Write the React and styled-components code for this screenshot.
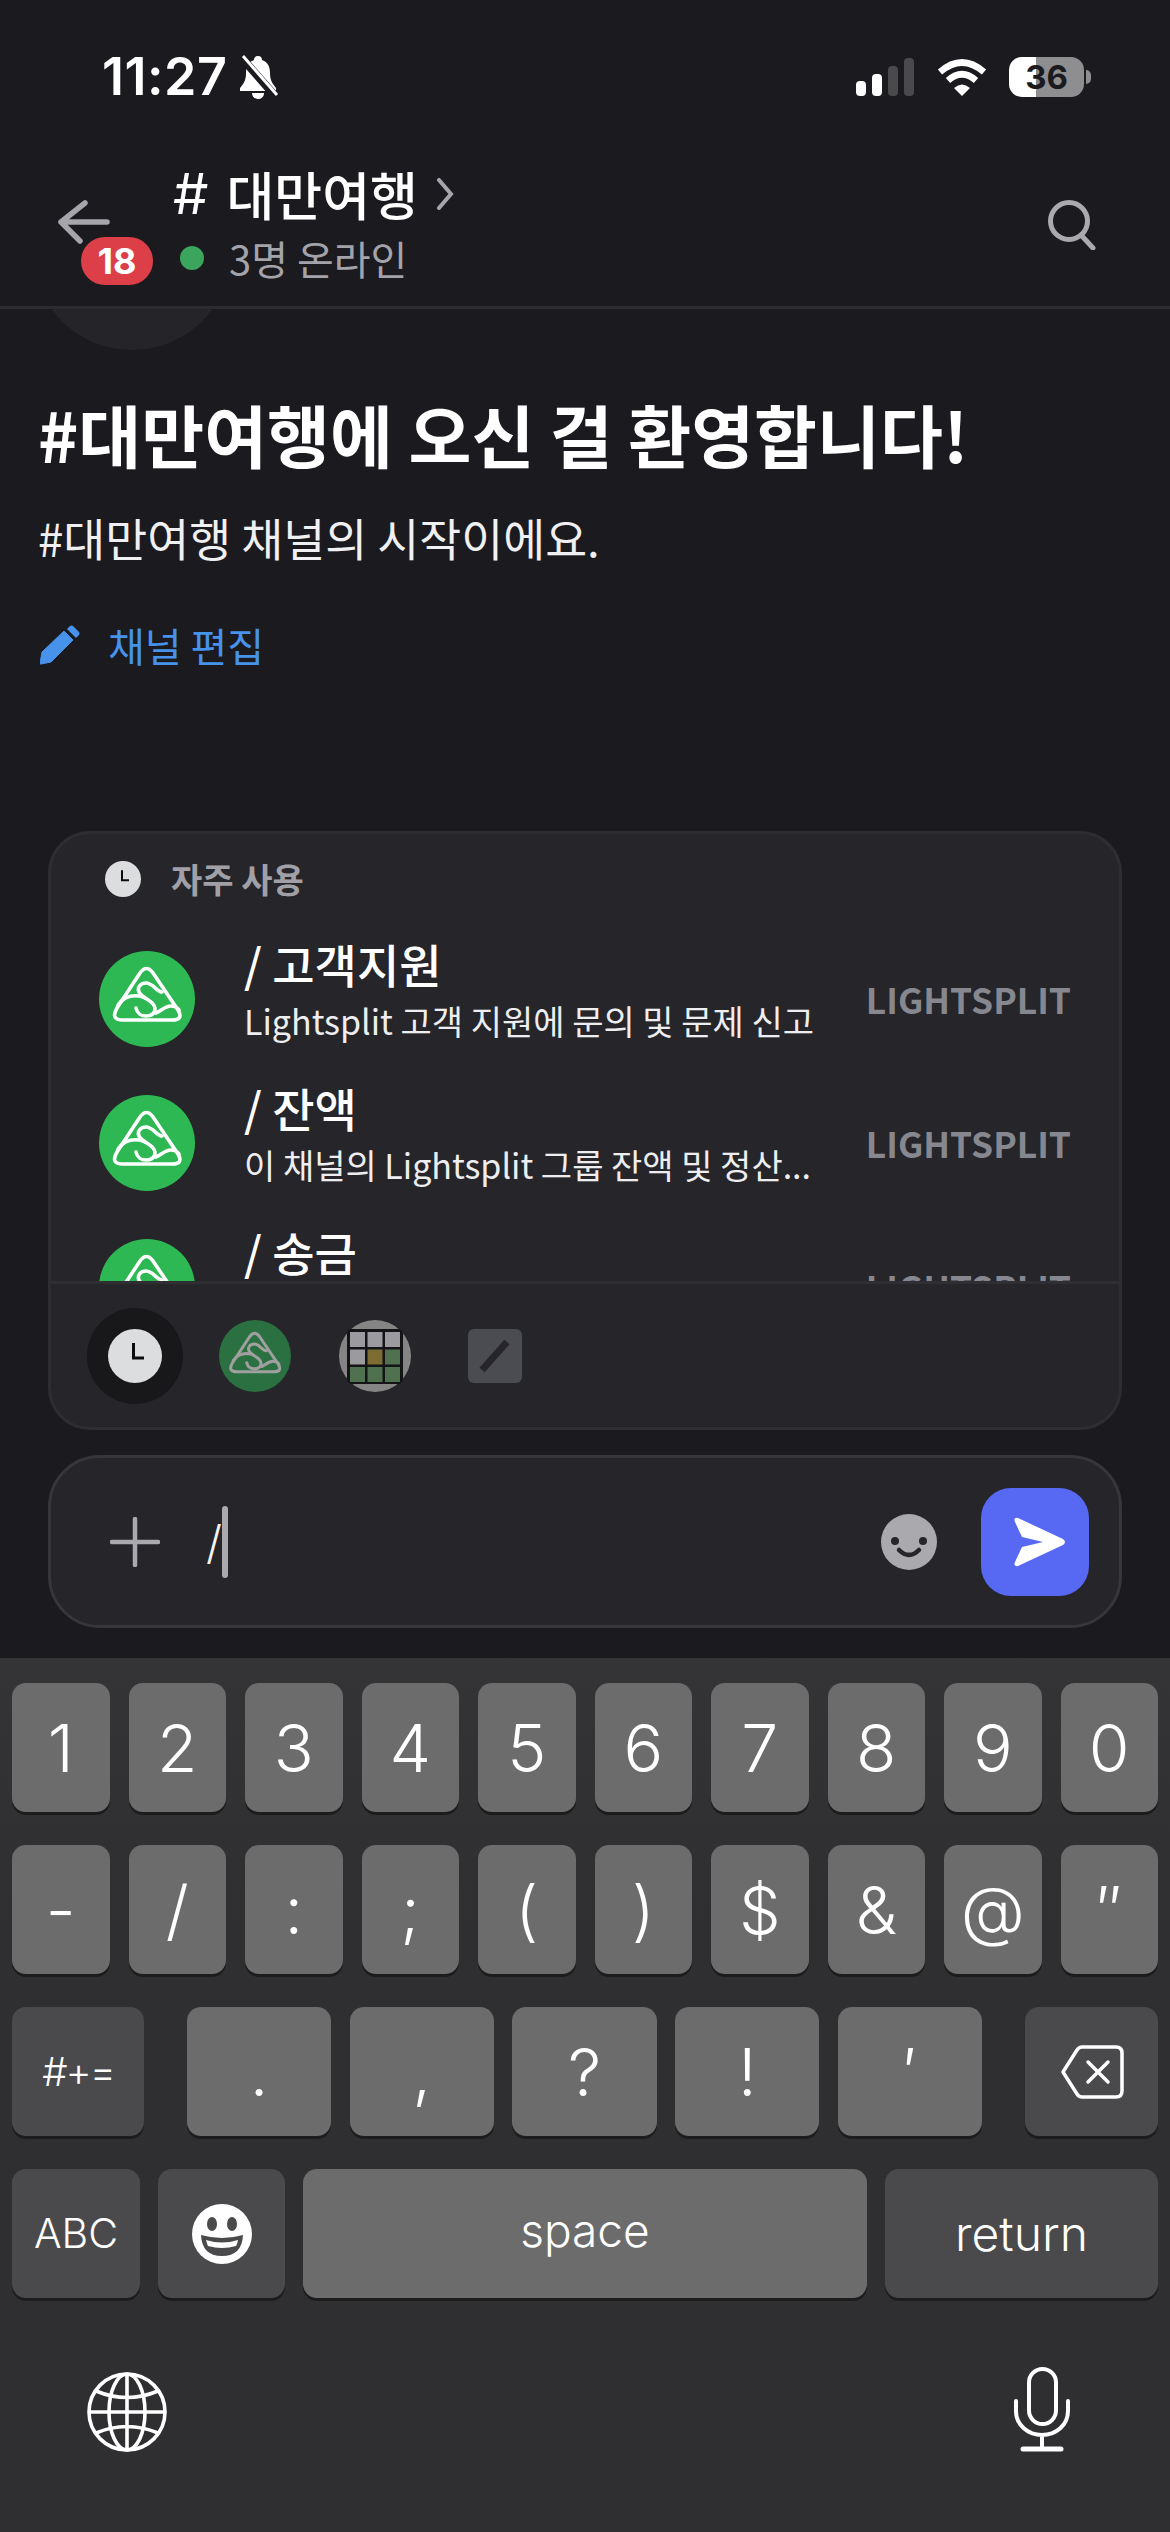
import React from "react";
import styled, { createGlobalStyle } from "styled-components";

const KR = `"Noto Sans CJK KR", "Noto Sans", sans-serif`;
const UI = `Inter, "Liberation Sans", sans-serif`;

const GlobalStyle = createGlobalStyle`
  html, body { margin: 0; padding: 0; background: #1a1a1f; }
  * { box-sizing: border-box; }
`;

const Screen = styled.div`
  width: 1170px;
  height: 2532px;
  display: flex;
  flex-direction: column;
  overflow: hidden;
  background: #1a1a1f;
  color: #fff;
  font-family: ${KR};
`;

/* status bar */
const StatusBar = styled.div`
  height: 150px;
  padding: 47px 79px 0 102px;
  display: flex;
  justify-content: space-between;
  align-items: flex-start;
`;
const StatusLeft = styled.div`
  display: flex;
  align-items: center;
  height: 60px;
  gap: 10px;
`;
const Time = styled.span`
  font-family: ${UI};
  font-size: 52px;
  font-weight: 600;
  line-height: 60px;
  letter-spacing: 0.5px;
`;
const StatusRight = styled.div`
  display: flex;
  align-items: center;
  height: 60px;
`;
const Battery = styled.div`
  width: 75px;
  height: 40px;
  margin-left: 22px;
  border-radius: 13px;
  background: linear-gradient(90deg, #fff 36%, #8e8e90 36%);
  color: #1a1a1f;
  font-family: ${UI};
  font-size: 33px;
  font-weight: 700;
  line-height: 40px;
  text-align: center;
`;
const BatteryNub = styled.div`
  width: 5px;
  height: 14px;
  margin-left: 2px;
  border-radius: 0 7px 7px 0;
  background: #8e8e90;
`;

/* channel header */
const Header = styled.header`
  height: 159px;
  padding: 12px 74px 0 58px;
  display: flex;
  align-items: flex-start;
  border-bottom: 3px solid #2b2c30;
`;
const BackButton = styled.div`
  position: relative;
  width: 52px;
  height: 44px;
  margin-top: 38px;
`;
const Badge = styled.span`
  position: absolute;
  left: 23px;
  top: 37px;
  width: 72px;
  height: 48px;
  border-radius: 24px;
  background: #dd3f48;
  box-shadow: 0 0 0 5px #1a1a1f;
  font-family: ${UI};
  font-size: 36px;
  font-weight: 700;
  line-height: 48px;
  text-align: center;
`;
const HeaderText = styled.div`
  margin-left: 63px;
  flex: 1;
`;
const ChannelName = styled.div`
  display: flex;
  align-items: center;
  height: 60px;
  margin-top: 2px;
  font-size: 52px;
  font-weight: 500;
  line-height: 60px;
  white-space: nowrap;
`;
const Hash = styled.span`
  font-family: ${UI};
  font-size: 56px;
  font-weight: 400;
  margin-right: 18px;
`;
const Presence = styled.div`
  display: flex;
  align-items: center;
  height: 52px;
  margin-top: 8px;
  color: #a3a3a9;
  font-size: 40px;
  line-height: 52px;
`;
const Dot = styled.span`
  width: 24px;
  height: 24px;
  margin: 0 25px 0 7px;
  border-radius: 50%;
  background: #3ba55d;
`;

/* channel welcome */
const AvatarStub = styled.div`
  height: 42px;
  padding-left: 32px;
  overflow: hidden;
`;
const AvatarCircle = styled.div`
  width: 200px;
  height: 200px;
  margin-top: -159px;
  border-radius: 50%;
  background: #252529;
`;
const Welcome = styled.section`
  padding: 0 38px;
`;
const WelcomeTitle = styled.h1`
  margin: 35px 0 0;
  font-size: 68.4px;
  font-weight: 700;
  line-height: 96px;
  white-space: nowrap;
`;
const WelcomeSub = styled.p`
  margin: 25px 0 0;
  color: #f0f0f2;
  font-size: 45.6px;
  line-height: 60px;
`;
const EditLink = styled.div`
  display: flex;
  align-items: center;
  gap: 28px;
  margin: 50px 0 0 2px;
  color: #4792ea;
  font-size: 40px;
  line-height: 56px;
`;

/* lower panel */
const Lower = styled.div`
  margin-top: auto;
  padding: 0 48px 30px;
  display: flex;
  flex-direction: column;
  gap: 25px;
`;
const Suggest = styled.div`
  height: 599px;
  display: flex;
  flex-direction: column;
  border: 3px solid #2d2d32;
  border-radius: 42px;
  background: #25252a;
`;
const SuggestHead = styled.div`
  height: 93px;
  padding: 27px 0 0 54px;
  display: flex;
  align-items: flex-start;
  gap: 30px;
  color: #a0a0a6;
  font-size: 34px;
  font-weight: 700;
  line-height: 36px;
`;
const CommandList = styled.div`
  height: 354px;
  overflow: hidden;
  flex: none;
`;
const CommandRow = styled.div`
  height: 144px;
  padding: 0 48px 0 48px;
  display: flex;
  align-items: center;
`;
const CommandText = styled.div`
  flex: 1;
  min-width: 0;
  height: 128px;
  margin-left: 49px;
`;
const CommandName = styled.div`
  font-size: 46px;
  font-weight: 500;
  line-height: 56px;
`;
const CommandDesc = styled.div`
  margin-top: 7px;
  color: #eeeef0;
  font-size: 34px;
  line-height: 46px;
  white-space: nowrap;
`;
const CommandSource = styled.div`
  color: #87888f;
  font-size: 35.4px;
  font-weight: 700;
  line-height: 44px;
`;
const Tabs = styled.div`
  flex: 1;
  padding-left: 36px;
  display: flex;
  align-items: center;
  gap: 24px;
  border-top: 3px solid #2e2e33;
`;
const Tab = styled.div`
  width: 96px;
  height: 96px;
  display: flex;
  align-items: center;
  justify-content: center;
  border-radius: 50%;
  background: ${(p) => (p.$active ? "#18181b" : "transparent")};
`;
const SlashTile = styled.div`
  width: 54px;
  height: 54px;
  border-radius: 6px;
  background: #4b4c52;
`;

/* composer */
const Composer = styled.div`
  height: 173px;
  padding: 0 30px 0 59px;
  display: flex;
  align-items: center;
  border: 3px solid #36363b;
  border-radius: 52px;
  background: #25252a;
`;
const Draft = styled.div`
  flex: 1;
  display: flex;
  align-items: center;
  margin-left: 46px;
  color: #f4f4f5;
  font-family: ${UI};
  font-size: 46px;
  font-weight: 300;
  line-height: 72px;
`;
const Caret = styled.span`
  width: 6px;
  height: 72px;
  border-radius: 3px;
  background: #a9a9ae;
`;
const SendButton = styled.div`
  width: 108px;
  height: 108px;
  margin-left: 44px;
  border-radius: 30px;
  background: #5768f3;
`;

/* keyboard */
const Keyboard = styled.div`
  height: 874px;
  flex: none;
  padding: 25px 12px 0;
  display: flex;
  flex-direction: column;
  gap: 33px;
  background: linear-gradient(#343436, #2f2f31 30%);
`;
const KeyRow = styled.div`
  display: flex;
  justify-content: space-between;
  gap: ${(p) => p.$gap || 19}px;
`;
const KeyGroup = styled.div`
  width: 795px;
  display: flex;
  gap: 18.5px;
`;
const Key = styled.div`
  flex: ${(p) => (p.$w ? `none` : 1)};
  width: ${(p) => (p.$w ? `${p.$w}px` : "auto")};
  height: 129px;
  display: flex;
  align-items: center;
  justify-content: center;
  border-radius: 14px;
  background: ${(p) => (p.$dark ? "#4a4a4c" : "#6c6c6d")};
  box-shadow: 0 3px 0 #1c1c1d;
  font-family: ${UI};
  font-size: ${(p) => p.$size || 66}px;
  font-weight: 300;
  line-height: 1;
  letter-spacing: ${(p) => p.$track || 0}px;
  padding-bottom: ${(p) => p.$lift || 0}px;
`;
const KeyboardFoot = styled.div`
  margin-top: 36px;
  padding: 0 88px 0 75px;
  display: flex;
  justify-content: space-between;
  align-items: flex-end;
`;

const Logo = ({ size, bg, stroke, sw = 3.6 }) => (
  <svg width={size} height={size} viewBox="0 0 96 96" style={{ flex: "none" }}>
    <circle cx="48" cy="48" r="48" fill={bg} />
    <g fill="none" stroke={stroke} strokeWidth={sw} strokeLinecap="round" strokeLinejoin="round">
      <path d="M41 22 Q47.5 13 54 22 L79 59 Q85 69 73 69 L24 69 Q11 69 18 57 Z" />
      <path d="M63 41 C58 41 54 32 47 32 C41 32 38 37 40 41 C42 46 50 48 54 53 C58 58 56 65 47 65 C42 65 38 62 37 57" />
      <path d="M19 54 C24 47 32 44 40 45 C42 45 44 46 46 47" />
      <path d="M57 62 C62 60 66 55 72 55 C75 55 78 56 80 59" />
    </g>
  </svg>
);

const ClockIcon = ({ size }) => (
  <svg width={size} height={size} viewBox="0 0 54 54">
    <circle cx="27" cy="27" r="27" fill="#dcddde" />
    <path d="M25.5 14 V29 H36" fill="none" stroke="#0c0c0e" strokeWidth="3" />
  </svg>
);

const WORDLE = ["#9a9a9f", "#9a9a9f", "#9a9a9f", "#9a9a9f", "#7d6d33", "#4f7150", "#4f7150", "#4f7150", "#4f7150"];

const GridIcon = () => (
  <svg width="72" height="72" viewBox="0 0 72 72">
    <circle cx="36" cy="36" r="36" fill="#858585" />
    <rect x="8" y="9" width="56" height="55" rx="5" fill="#141416" />
    {WORDLE.map((c, i) => (
      <rect key={i} x={11 + (i % 3) * 17.5} y={12 + Math.floor(i / 3) * 17.5} width="15" height="15" fill={c} />
    ))}
  </svg>
);

const commands = [
  { name: "/ 고객지원", desc: "Lightsplit 고객 지원에 문의 및 문제 신고" },
  { name: "/ 잔액", desc: "이 채널의 Lightsplit 그룹 잔액 및 정산..." },
  { name: "/ 송금", desc: "" },
];

const row1 = ["1", "2", "3", "4", "5", "6", "7", "8", "9", "0"];
const row2 = ["-", "/", ":", ";", "(", ")", "$", "&", "@", "″"];
const row3 = [".", ",", "?", "!", "′"];

const App = () => {
  return (
    <Screen>
      <GlobalStyle />
      <StatusBar>
        <StatusLeft>
          <Time>11:27</Time>
          <svg width="42" height="44" viewBox="0 0 42 44">
            <path d="M21 1 C24 1 25 3 25 5 C31 7 33 12 33 18 C33 25 35 28 39 33 L39 36 L3 36 L3 33 C7 28 9 25 9 18 C9 12 11 7 17 5 C17 3 18 1 21 1 Z M15 38 H27 C27 42 24 44 21 44 C18 44 15 42 15 38 Z" fill="#fff" />
            <path d="M4 2 L39 42" stroke="#1a1a1f" strokeWidth="8" />
            <path d="M6 1 L40 40" stroke="#fff" strokeWidth="3" />
          </svg>
        </StatusLeft>
        <StatusRight>
          <svg width="58" height="38" viewBox="0 0 58 38">
            <rect x="0" y="23" width="10" height="15" rx="4" fill="#fff" />
            <rect x="16" y="16" width="10" height="22" rx="4" fill="#fff" />
            <rect x="32" y="8" width="10" height="30" rx="4" fill="#4a4a4c" />
            <rect x="48" y="0" width="10" height="38" rx="4" fill="#4a4a4c" />
          </svg>
          <svg width="50" height="38" viewBox="0 0 50 38" style={{ marginLeft: 23 }}>
            <path d="M3 14 Q25 -5 47 14" fill="none" stroke="#fff" strokeWidth="6.5" />
            <path d="M11 22.5 Q25 10 39 22.5" fill="none" stroke="#fff" strokeWidth="6.5" />
            <path d="M17 30 Q25 23 33 30 L25 38 Z" fill="#fff" />
          </svg>
          <Battery>36</Battery>
          <BatteryNub />
        </StatusRight>
      </StatusBar>

      <Header>
        <BackButton>
          <svg width="52" height="44" viewBox="0 0 52 44">
            <path d="M27 3 L3 22 L22 41 M3 22 H49" fill="none" stroke="#a5a5ab" strokeWidth="5.5" strokeLinecap="round" strokeLinejoin="round" />
          </svg>
          <Badge>18</Badge>
        </BackButton>
        <HeaderText>
          <ChannelName>
            <Hash>#</Hash>대만여행
            <svg width="18" height="32" viewBox="0 0 18 32" style={{ marginLeft: 18 }}>
              <path d="M3 2 L15 16 L3 30" fill="none" stroke="#a5a5ab" strokeWidth="4" strokeLinecap="round" />
            </svg>
          </ChannelName>
          <Presence>
            <Dot />
            3명 온라인
          </Presence>
        </HeaderText>
        <svg width="48" height="50" viewBox="0 0 48 50" style={{ marginTop: 38 }}>
          <circle cx="21" cy="21" r="18.5" fill="none" stroke="#a9a9ae" strokeWidth="5" />
          <path d="M33 35 L45 48" stroke="#a9a9ae" strokeWidth="5" strokeLinecap="round" />
        </svg>
      </Header>

      <AvatarStub>
        <AvatarCircle />
      </AvatarStub>
      <Welcome>
        <WelcomeTitle>#대만여행에 오신 걸 환영합니다!</WelcomeTitle>
        <WelcomeSub>#대만여행 채널의 시작이에요.</WelcomeSub>
        <EditLink>
          <svg width="40" height="40" viewBox="0 0 40 40">
            <path d="M1 39 Q0 39.5 0 38 L2 27 L24 6 L33 15 L11 37 Z" fill="currentColor" stroke="currentColor" strokeWidth="1" strokeLinejoin="round" />
            <path d="M27 4 L30 1 Q31 0 33 1 L39 7 Q40 9 39 10 L36 13 Z" fill="currentColor" />
          </svg>
          채널 편집
        </EditLink>
      </Welcome>

      <Lower>
        <Suggest>
          <SuggestHead>
            <ClockIcon size={36} />
            자주 사용
          </SuggestHead>
          <CommandList>
            {commands.map((c) => (
              <CommandRow key={c.name}>
                <Logo size={96} bg="#2db854" stroke="#fff" />
                <CommandText>
                  <CommandName>{c.name}</CommandName>
                  <CommandDesc>{c.desc}</CommandDesc>
                </CommandText>
                <CommandSource>LIGHTSPLIT</CommandSource>
              </CommandRow>
            ))}
          </CommandList>
          <Tabs>
            <Tab $active>
              <ClockIcon size={54} />
            </Tab>
            <Tab>
              <Logo size={72} bg="#2a7041" stroke="#a0a0a0" sw={4} />
            </Tab>
            <Tab>
              <GridIcon />
            </Tab>
            <Tab>
              <SlashTile>
                <svg width="54" height="54" viewBox="0 0 54 54">
                  <path d="M14 41 L39 13" stroke="#26262a" strokeWidth="7" />
                </svg>
              </SlashTile>
            </Tab>
          </Tabs>
        </Suggest>

        <Composer>
          <svg width="50" height="50" viewBox="0 0 50 50">
            <path d="M25 2 V48 M2 25 H48" stroke="#a9a9ae" strokeWidth="4.5" strokeLinecap="round" />
          </svg>
          <Draft>
            /<Caret />
          </Draft>
          <svg width="56" height="56" viewBox="0 0 56 56">
            <circle cx="28" cy="28" r="28" fill="#a9a9ae" />
            <circle cx="14" cy="27" r="4" fill="#25252a" />
            <circle cx="42" cy="27" r="4" fill="#25252a" />
            <path d="M18 36 Q28 46 38 36" fill="none" stroke="#25252a" strokeWidth="4.5" strokeLinecap="round" />
          </svg>
          <SendButton>
            <svg width="108" height="108" viewBox="0 0 108 108">
              <path d="M37 30 L82 51 Q86 54 82 57 L37 78 Q32 79 34 74 L41 59 L62 54 L41 49 L34 34 Q32 29 37 30 Z" fill="#fff" />
            </svg>
          </SendButton>
        </Composer>
      </Lower>

      <Keyboard>
        <KeyRow>
          {row1.map((k) => (
            <Key key={k}>{k}</Key>
          ))}
        </KeyRow>
        <KeyRow>
          {row2.map((k) => (
            <Key key={k}>{k}</Key>
          ))}
        </KeyRow>
        <KeyRow>
          <Key $dark $w={132} $size={40} $track={-2}>
            #+=
          </Key>
          <KeyGroup>
            {row3.map((k) => (
              <Key key={k}>{k}</Key>
            ))}
          </KeyGroup>
          <Key $dark $w={133}>
            <svg width="64" height="54" viewBox="0 0 64 54">
              <path d="M22 2 H56 Q62 2 62 8 V46 Q62 52 56 52 H22 Q19 52 17 49 L3 27 L17 5 Q19 2 22 2 Z" fill="none" stroke="#fff" strokeWidth="3.5" strokeLinejoin="round" />
              <path d="M28 17 L48 37 M48 17 L28 37" stroke="#fff" strokeWidth="3.5" strokeLinecap="round" />
            </svg>
          </Key>
        </KeyRow>
        <KeyRow $gap={18}>
          <Key $dark $w={128} $size={41}>
            ABC
          </Key>
          <Key $dark $w={127}>
            <svg width="60" height="60" viewBox="0 0 60 60">
              <circle cx="30" cy="30" r="30" fill="#fff" />
              <ellipse cx="20" cy="20" rx="5" ry="7" fill="#4a4a4c" />
              <ellipse cx="40" cy="20" rx="5" ry="7" fill="#4a4a4c" />
              <path d="M9 31 Q30 37 51 31 Q50 52 30 52 Q10 52 9 31 Z" fill="#4a4a4c" />
              <path d="M14 36 Q30 41 46 36 Q45 41 44 42 Q30 46 16 42 Q15 40 14 36 Z" fill="#fff" />
            </svg>
          </Key>
          <Key $w={564} $size={46} $lift={8}>
            space
          </Key>
          <Key $dark $w={273} $size={48}>
            return
          </Key>
        </KeyRow>
        <KeyboardFoot>
          <svg width="80" height="80" viewBox="0 0 80 80">
            <g fill="none" stroke="#fff" strokeWidth="3.6">
              <circle cx="40" cy="40" r="38" />
              <ellipse cx="40" cy="40" rx="18" ry="38" />
              <path d="M40 2 V78 M2 40 H78 M9 19 Q40 32 71 19 M9 61 Q40 48 71 61" />
            </g>
          </svg>
          <svg width="56" height="85" viewBox="0 0 56 85">
            <g fill="none" stroke="#fff" strokeWidth="4" strokeLinecap="round">
              <rect x="15" y="2" width="27" height="55" rx="13.5" />
              <path d="M2 34 V44 C2 58 14 68 28 68 C42 68 54 58 54 44 V34 M28 68 V82" />
              <path d="M9 82 H47" strokeWidth="5" />
            </g>
          </svg>
        </KeyboardFoot>
      </Keyboard>
    </Screen>
  );
};

export default App;
